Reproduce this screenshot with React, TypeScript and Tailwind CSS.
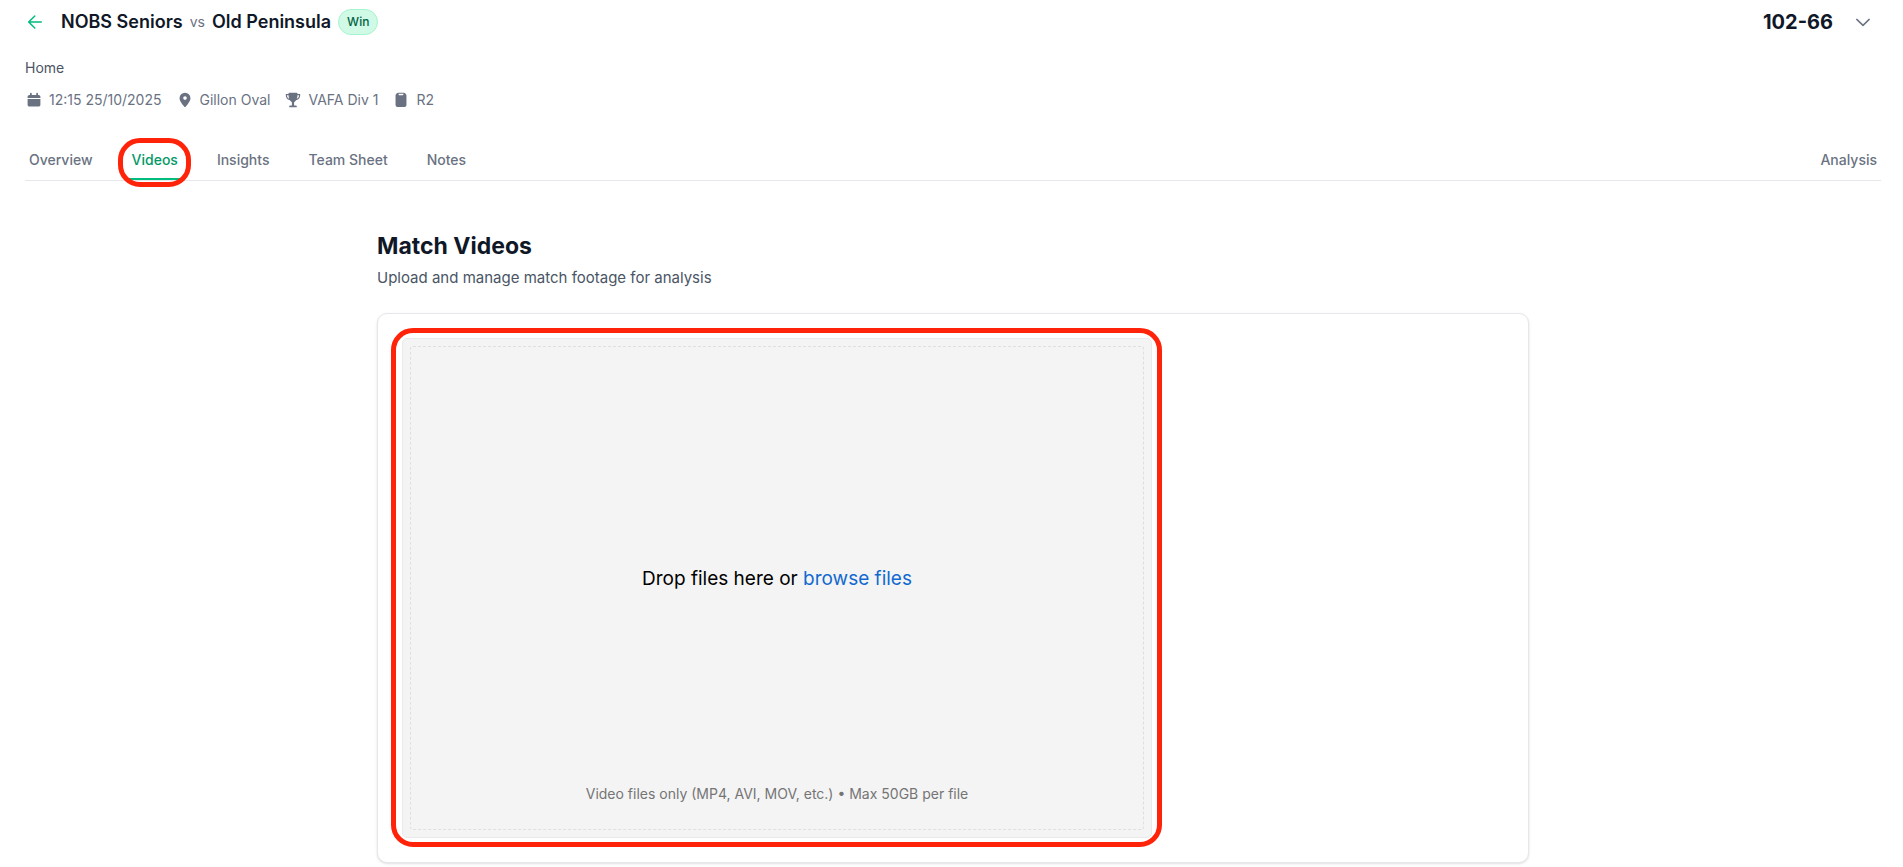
import type { ReactNode } from "react";

const tabs = ["Overview", "Videos", "Insights", "Team Sheet", "Notes"];

function Icon({ children }: { children: ReactNode }) {
  return (
    <svg viewBox="-1 -1 22 22" className="size-4 shrink-0" fill="currentColor" aria-hidden="true">
      {children}
    </svg>
  );
}

function Detail({ icon, text }: { icon: ReactNode; text: string }) {
  return (
    <li className="flex items-center gap-[7px]">
      <Icon>{icon}</Icon>
      {text}
    </li>
  );
}

function MatchHeader() {
  return (
    <header className="flex h-11 items-center justify-between">
      <div className="flex items-center">
        <button type="button" aria-label="Back" className="flex size-5 items-center justify-center text-emerald-500">
          <svg viewBox="0 0 20 20" className="size-5" fill="none" stroke="currentColor" strokeWidth="1.5" strokeLinecap="round" strokeLinejoin="round">
            <path d="M9.8 4 3.7 10l6.1 6M4 10h12.3" />
          </svg>
        </button>
        <h1 className="ml-4 flex items-center gap-[7px] text-lg font-semibold text-gray-900">
          <span>NOBS Seniors</span>
          <span className="text-sm font-normal text-gray-500">vs</span>
          <span>Old Peninsula</span>
        </h1>
        <span className="ml-[7px] rounded-full border border-emerald-200 bg-emerald-100 px-2 py-1 text-xs font-medium text-emerald-800">
          Win
        </span>
      </div>
      <div className="flex items-center gap-5 pr-2">
        <span className="text-xl font-bold text-gray-900">102-66</span>
        <button type="button" aria-label="Show match details" className="flex size-5 items-center justify-center text-gray-500">
          <svg viewBox="0 0 20 20" className="size-5" fill="none" stroke="currentColor" strokeWidth="1.5" strokeLinecap="round" strokeLinejoin="round">
            <path d="m3.8 7.4 6.2 6 6.2-6" />
          </svg>
        </button>
      </div>
    </header>
  );
}

function MatchDetails() {
  return (
    <div className="mt-3.5 text-sm">
      <p className="text-gray-600">Home</p>
      <ul className="mt-3 flex items-center gap-[15px] pl-px text-gray-500">
        <Detail
          text="12:15 25/10/2025"
          icon={<path d="M4.500 1.200c0-.7.5-1.200 1.200-1.200s1.200.5 1.200 1.200v1.800h6.200V1.200c0-.7.5-1.200 1.200-1.200s1.200.5 1.200 1.200v1.800h.8c1.400 0 2.500 1 2.500 2.200v2H1.200v-2c0-1.200 1.100-2.200 2.500-2.200h.8zM1.200 8.600h17.600v7.900c0 1.500-1.100 2.500-2.500 2.500H3.700c-1.400 0-2.500-1-2.500-2.500z" />}
        />
        <Detail
          text="Gillon Oval"
          icon={<path fillRule="evenodd" d="M10 0a7.500 7.500 0 0 0-7.500 7.500c0 4.200 4.900 9.400 6.600 11.800.4.600 1.400.6 1.800 0 1.700-2.400 6.600-7.600 6.600-11.800A7.500 7.500 0 0 0 10 0Zm0 4.900a2.500 2.500 0 1 1 0 5 2.500 2.500 0 0 1 0-5Z" />}
        />
        <Detail
          text="VAFA Div 1"
          icon={<path fillRule="evenodd" d="M5 0h10c.7 0 1.200.5 1.200 1.200v.6h3.200c.4 0 .6.3.6.600 0 3.800-1.500 7.200-5.800 8-1 1.500-1.800 2.300-2.700 2.700v4.300h2.200c.9 0 1.500.6 1.500 1.400V20H4.800v-1.200c0-.8.6-1.400 1.500-1.400h2.200v-4.300c-.9-.4-1.700-1.200-2.700-2.700C1.500 9.600 0 6.200 0 2.400c0-.3.200-.6.600-.6h3.200v-.6C3.800.5 4.300 0 5 0ZM1.600 3.400c.3 2.300 1.200 4.100 3.200 5C4.200 6.900 3.900 5.200 3.900 3.400Zm16.800 0h-2.300c0 1.800-.3 3.500-.9 5 2-.9 2.900-2.700 3.200-5Z" />}
        />
        <Detail
          text="R2"
          icon={<path fillRule="evenodd" d="M6.400 0h7.200c2.200.2 3.900 1.700 3.900 4.200v12.600c0 1.600-1.200 2.700-2.700 2.700H5.200a2.700 2.700 0 0 1-2.700-2.700V4.200C2.500 1.700 4.200.2 6.400 0Zm.3 1.500v1.400c0 .4.300.7.700.7h5.200c.4 0 .7-.3.7-.7V1.500Z" />}
        />
      </ul>
    </div>
  );
}

function TabBar() {
  return (
    <nav aria-label="Match sections" className="mt-6 flex justify-between border-b border-gray-200 text-sm font-medium text-gray-500">
      <div className="flex gap-[31px]">
        {tabs.map((tab) => {
          const active = tab === "Videos";
          return (
            <a
              key={tab}
              href="#"
              aria-current={active ? "page" : undefined}
              className={
                active
                  ? "relative border-b-2 border-emerald-500 px-1 pt-4 pb-2 text-emerald-600"
                  : "border-b-2 border-transparent px-1 pt-4 pb-2"
              }
            >
              {tab}
              {active && (
                <span className="pointer-events-none absolute top-1 -right-[9px] -bottom-[9px] -left-2.5 rounded-[22px] border-5 border-[#ff230a]" />
              )}
            </a>
          );
        })}
      </div>
      <a href="#" className="px-1 pt-4 pb-2">
        Analysis
      </a>
    </nav>
  );
}

function Uploader() {
  return (
    <div className="relative flex h-[500px] w-full max-w-[750px] rounded-[5px] border border-[#eaeaea] bg-[#f4f4f4] p-[7px]">
      <div className="flex flex-1 flex-col rounded-[3px] border border-dashed border-[#dfdfdf] text-center">
        <p className="flex flex-1 items-center justify-center pt-7 text-[19px] text-black">
          <span>
            Drop files here or{" "}
            <button type="button" className="text-[#1269cf]">
              browse files
            </button>
          </span>
        </p>
        <p className="pb-[25px] text-sm text-[#757575]">Video files only (MP4, AVI, MOV, etc.) • Max 50GB per file</p>
      </div>
      <span className="pointer-events-none absolute -inset-3 top-[-11px] right-[-11px] bottom-[-10px] rounded-[22px] border-5 border-[#ff230a]" />
    </div>
  );
}

export default function App() {
  return (
    <div className="bg-white pr-[22px] pl-[25px] font-['Inter','Liberation_Sans',sans-serif]">
      <MatchHeader />
      <MatchDetails />
      <TabBar />
      <main className="mx-auto mt-[49px] max-w-6xl pb-1">
        <h2 className="text-[23px] leading-8 font-bold text-gray-900">Match Videos</h2>
        <p className="mt-1 text-[15px] leading-6 text-gray-600">Upload and manage match footage for analysis</p>
        <section className="mt-[23px] rounded-[10px] border border-gray-200 bg-white p-6 shadow-sm">
          <Uploader />
        </section>
      </main>
    </div>
  );
}
